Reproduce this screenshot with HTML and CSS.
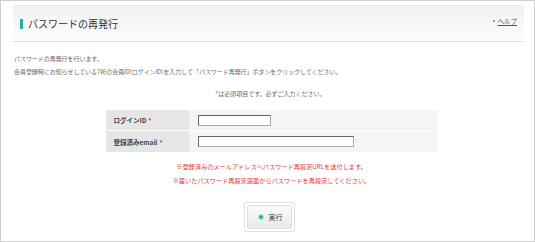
FILE: index.html
```html
<!DOCTYPE html>
<html lang="ja">
<head>
<meta charset="utf-8">
<link rel="stylesheet" href="styles.css">
</head>
<body>
<div class="frame">
  <div class="header">
    <h1 class="title"><span class="bar"></span>パスワードの再発行</h1>
    <a class="help" href="#"><span class="dot"></span>ヘルプ</a>
  </div>
  <div class="intro">
    <p>パスワードの再発行を行います。</p>
    <p>会員登録時にお知らせしている7桁の会員ID(ログインID)を入力して「パスワード再発行」ボタンをクリックしてください。</p>
  </div>
  <p class="required"><span class="req">*</span>は必須項目です。必ずご入力ください。</p>
  <div class="form">
    <div class="row">
      <div class="label">ログインID<span class="req mark">*</span></div>
      <div class="value"><input class="field short" type="text"></div>
    </div>
    <div class="row">
      <div class="label">登録済みemail<span class="req mark">*</span></div>
      <div class="value"><input class="field long" type="text"></div>
    </div>
  </div>
  <div class="notes">
    <p>※登録済みのメールアドレスへパスワード再設定URLを送付します。</p>
    <p>※届いたパスワード再設定画面からパスワードを再設定してください。</p>
  </div>
  <div class="actions">
    <div class="btn-wrap">
      <button class="btn" type="button"><span class="dot"></span>実行</button>
    </div>
  </div>
</div>
</body>
</html>
```

FILE: styles.css
```css
html, body {
  margin: 0;
  padding: 0;
  background: #fff;
}
body {
  font-family: "Noto Sans CJK JP", "Noto Sans", sans-serif;
  color: #555;
}
p { margin: 0; }
.frame {
  box-sizing: border-box;
  width: 535px;
  height: 242px;
  border: 1px solid #cfcfcf;
  padding: 4px 10px 0 12px;
}
.header {
  height: 35px;
  border-top: 1px solid #ececec;
  border-bottom: 1px solid #e0e0e0;
  background: linear-gradient(#f1f1f1, #fdfdfd);
  display: flex;
  align-items: center;
  justify-content: space-between;
  padding: 0 6px 0 7px;
}
.title {
  margin: 0;
  font-size: 10px;
  font-weight: normal;
  color: #333;
  display: flex;
  align-items: center;
  gap: 5px;
  line-height: 12px;
}
.bar {
  display: block;
  width: 3px;
  height: 10px;
  background: #1bb0a8;
}
.help {
  font-size: 6.5px;
  color: #555;
  text-decoration: underline;
  display: flex;
  align-items: center;
  gap: 3px;
  margin-top: -5px;
  margin-right: 1px;
}
.dot {
  display: inline-block;
  width: 2px;
  height: 2px;
  border-radius: 50%;
  background: #1bb0a8;
}
.intro {
  margin: 10px 0 0 1px;
  font-size: 6px;
  line-height: 13px;
  color: #6a6a6a;
  letter-spacing: -0.05px;
}
.required {
  margin-top: 9px;
  text-align: center;
  font-size: 6px;
  line-height: 13px;
  color: #6a6a6a;
  padding-left: 4px;
}
.req { color: #e8383d; }
.mark { margin-left: 2px; }
.form {
  width: 332px;
  margin: 10px auto 0;
  transform: translateX(3px);
  display: flex;
  flex-direction: column;
  gap: 1px;
}
.row {
  display: flex;
  height: 20px;
}
.row + .row { height: 21px; }
.label {
  width: 75px;
  padding-left: 8px;
  background: #e6e6e6;
  font-size: 6.5px;
  font-weight: bold;
  color: #444;
  display: flex;
  align-items: center;
}
.value {
  flex: 1;
  background: #f5f5f5;
  display: flex;
  align-items: center;
  padding-left: 9px;
}
.field {
  box-sizing: border-box;
  height: 11px;
  margin: 0;
  padding: 0;
  border: 1px solid #aaa;
  border-top-color: #666;
  border-left-color: #666;
  background: #fff;
}
.short { width: 73px; }
.long { width: 156px; }
.notes {
  margin-top: 8px;
  text-align: center;
  font-size: 6.2px;
  line-height: 14px;
  color: #e8383d;
  padding-left: 6px;
}
.actions {
  margin-top: 14px;
  display: flex;
  justify-content: center;
  padding-left: 1px;
}
.btn-wrap {
  box-sizing: border-box;
  width: 51px;
  height: 30px;
  border: 1px solid #e2e2e2;
  border-radius: 2px;
  padding: 2px;
  background: #fff;
}
.btn {
  box-sizing: border-box;
  width: 100%;
  height: 100%;
  border: 1px solid #dedede;
  border-radius: 2px;
  background: linear-gradient(#fbfbfb, #e9e9e9);
  font-family: "Noto Sans CJK JP", sans-serif;
  font-size: 7px;
  color: #333;
  display: flex;
  align-items: center;
  justify-content: center;
  gap: 5px;
  padding: 0 0 0 2px;
}
.btn .dot {
  width: 4px;
  height: 4px;
  border: 1px solid #bfe9e6;
  background: #1bb0a8;
}
```
